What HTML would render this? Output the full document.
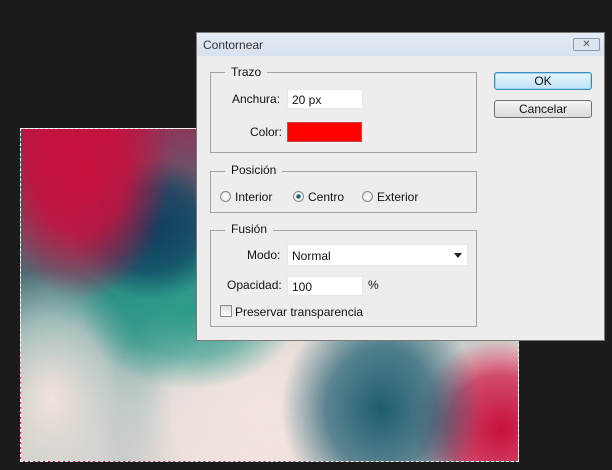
<!DOCTYPE html>
<html><head><style>
body{margin:0;width:612px;height:470px;background:#1b1b1b;position:relative;overflow:hidden;font-family:"Liberation Sans",sans-serif;font-size:12px;color:#111}
.a{position:absolute}
#photo{left:20px;top:128px;width:499px;height:334px;border:1px dashed #fff;box-sizing:border-box;
background:
radial-gradient(ellipse 90px 130px at 60px 40px,#c8103e 0%,rgba(200,16,62,.85) 50%,rgba(200,16,62,0) 100%),
radial-gradient(ellipse 80px 70px at 130px 100px,#0c3f60 0%,rgba(12,63,96,.7) 60%,rgba(12,63,96,0) 100%),
radial-gradient(ellipse 110px 80px at 170px 180px,#2a9a88 0%,rgba(42,154,136,.6) 60%,rgba(42,154,136,0) 100%),
radial-gradient(ellipse 100px 110px at 360px 280px,#1c5d70 0%,rgba(28,93,112,.7) 55%,rgba(28,93,112,0) 100%),
radial-gradient(ellipse 90px 90px at 480px 300px,#c8103e 0%,rgba(200,16,62,.7) 60%,rgba(200,16,62,0) 100%),
radial-gradient(ellipse 150px 140px at 240px 280px,#f3e4e0 0%,rgba(243,228,224,.85) 60%,rgba(243,228,224,0) 100%),
radial-gradient(ellipse 100px 130px at 30px 270px,#f2e2dc 0%,rgba(239,224,220,.6) 60%,rgba(239,224,220,0) 100%),
linear-gradient(160deg,#b01848 0%,#2a8a86 40%,#e8d8d6 80%);}
#dlg{left:196px;top:32px;width:409px;height:309px;background:#ededed;border:1px solid #7a7a7a;box-sizing:border-box}
#title{left:0;top:0;width:407px;height:23px;background:linear-gradient(#e4ecf6,#d7e2ef);}
.grp{border:1px solid #a3a3a3;box-sizing:border-box}
.lbl{background:#ededed;padding:0 6px;font-size:12px}
.inp{background:#fff;border:1px solid #e8e8e8;box-sizing:border-box;padding:3px 0 0 4px}
.btn{width:98px;height:18px;border:1px solid #707070;border-radius:3px;box-sizing:border-box;text-align:center;line-height:16px;background:linear-gradient(#f4f4f4,#dcdcdc)}
.rad{width:11px;height:11px;border-radius:50%;border:1px solid #8a8a8a;background:radial-gradient(#fff,#ddd);box-sizing:border-box}
</style></head><body>
<div id="photo" class="a"></div>
<div id="dlg" class="a">
 <div id="title" class="a"><span class="a" style="left:6px;top:5px;color:#333">Contornear</span>
  <div class="a" style="left:376px;top:5px;width:27px;height:13px;border:1px solid #8a9bb0;border-radius:2px;box-sizing:border-box;background:#dde5ee;text-align:center;font-size:10px;line-height:11px;color:#555">✕</div></div>
 <div class="a grp" style="left:13px;top:39px;width:267px;height:81px"></div>
 <span class="a lbl" style="left:28px;top:32px">Trazo</span>
 <span class="a" style="left:35px;top:59px">Anchura:</span>
 <div class="a inp" style="left:90px;top:56px;width:76px;height:20px">20 px</div>
 <span class="a" style="left:53px;top:92px">Color:</span>
 <div class="a" style="left:90px;top:89px;width:75px;height:20px;background:#f00;border:1px solid #c44;box-sizing:border-box"></div>
 <div class="a grp" style="left:13px;top:138px;width:267px;height:42px"></div>
 <span class="a lbl" style="left:28px;top:130px">Posición</span>
 <div class="a rad" style="left:23px;top:158px"></div><span class="a" style="left:38px;top:157px">Interior</span>
 <div class="a rad" style="left:96px;top:158px;background:radial-gradient(#1f5f86 30%,#fff 40%,#ddd)"></div><span class="a" style="left:111px;top:157px">Centro</span>
 <div class="a rad" style="left:165px;top:158px"></div><span class="a" style="left:180px;top:157px">Exterior</span>
 <div class="a grp" style="left:13px;top:197px;width:267px;height:97px"></div>
 <span class="a lbl" style="left:28px;top:189px">Fusión</span>
 <span class="a" style="left:50px;top:215px">Modo:</span>
 <div class="a inp" style="left:90px;top:211px;width:181px;height:22px;padding-top:4px">Normal<span class="a" style="right:5px;top:8px;width:0;height:0;border-left:4px solid transparent;border-right:4px solid transparent;border-top:5px solid #222"></span></div>
 <span class="a" style="left:30px;top:245px">Opacidad:</span>
 <div class="a inp" style="left:90px;top:243px;width:76px;height:20px">100</div>
 <span class="a" style="left:171px;top:245px">%</span>
 <div class="a" style="left:23px;top:272px;width:12px;height:12px;border:1px solid #8a8a8a;box-sizing:border-box;background:linear-gradient(#ddd,#fff)"></div>
 <span class="a" style="left:38px;top:272px">Preservar transparencia</span>
 <div class="a btn" style="left:297px;top:39px;border-color:#3c8fb8;background:linear-gradient(#e6f5fc,#bfe3f5);box-shadow:0 0 0 1px #9dd5ee inset">OK</div>
 <div class="a btn" style="left:297px;top:67px">Cancelar</div>
</div>
</body></html>
